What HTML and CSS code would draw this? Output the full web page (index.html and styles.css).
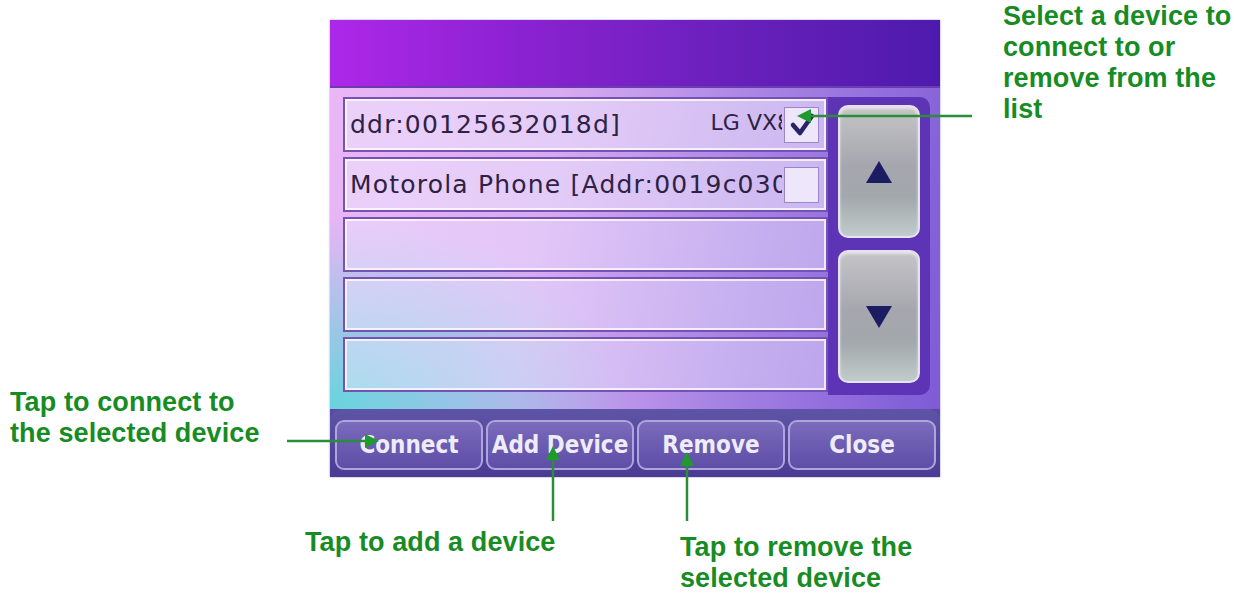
FILE: index.html
```html
<!DOCTYPE html>
<html lang="en">
<head>
    <meta charset="UTF-8">
    <meta name="viewport" content="width=device-width, initial-scale=1.0">
    <title>Bluetooth Devices</title>
    <link rel="stylesheet" href="styles.css">
</head>
<body>
    <div class="stage">
        <!-- Device window -->
        <div class="device">
            <div class="titlebar"></div>

            <div class="content">
                <div class="list">
                    <div class="row">
                        <span class="label">
                            <span>ddr:00125632018d]</span>
                            <span class="model">LG VX8</span>
                        </span>
                        <span class="check">
                            <svg width="30" height="30" viewBox="0 0 30 30">
                                <path d="M6 15 L13 23 L25 6" fill="none" stroke="#2a2466" stroke-width="4.5" stroke-linecap="round" stroke-linejoin="round"/>
                            </svg>
                        </span>
                    </div>
                    <div class="row">
                        <span class="label">Motorola Phone [Addr:0019c030]</span>
                        <span class="check"></span>
                    </div>
                    <div class="row"></div>
                    <div class="row"></div>
                    <div class="row"></div>
                </div>

                <div class="scroller">
                    <button class="scroll-btn"><span class="tri up"></span></button>
                    <button class="scroll-btn"><span class="tri down"></span></button>
                </div>
            </div>

            <div class="toolbar">
                <button class="tool-btn">Connect</button>
                <button class="tool-btn">Add Device</button>
                <button class="tool-btn">Remove</button>
                <button class="tool-btn">Close</button>
            </div>
        </div>

        <!-- Callout pointers -->
        <svg class="pointers" width="1234" height="595" viewBox="0 0 1234 595">
            <g stroke="#2b8c3a" stroke-width="2.5">
                <line x1="806" y1="116" x2="972" y2="116"/>
                <line x1="287" y1="441" x2="368" y2="441"/>
                <line x1="553" y1="458" x2="553" y2="521"/>
                <line x1="687" y1="464" x2="687" y2="521"/>
            </g>
            <g fill="#1f9a2e">
                <polygon points="797,116 811,109 811,123"/>
                <polygon points="379,441 365,434 365,448"/>
                <polygon points="553,446 546,460 560,460"/>
                <polygon points="687,452 680,466 694,466"/>
            </g>
        </svg>

        <p class="note note-select">Select a device to<br>connect to or<br>remove from the<br>list</p>
        <p class="note note-connect">Tap to connect to<br>the selected device</p>
        <p class="note note-add">Tap to add a device</p>
        <p class="note note-remove">Tap to remove the<br>selected device</p>
    </div>
</body>
</html>
```

FILE: styles.css
```css
/* General Styling */
body {
    margin: 0;
    background-color: #ffffff;
    font-family: "DejaVu Sans", sans-serif;
}

.stage {
    position: relative;
    width: 1234px;
    height: 595px;
    padding: 20px 0 0 330px;
    box-sizing: border-box;
    overflow: hidden;
}

/* Device window */
.device {
    width: 610px;
    height: 457px;
    display: flex;
    flex-direction: column;
    background: #5a48a4;
    box-shadow: 0 0 2px rgba(60, 40, 120, 0.5);
}

.titlebar {
    height: 66px;
    background: linear-gradient(90deg, #ad28e8 0%, #8c22d2 30%, #6a20bc 65%, #4e1aae 100%);
    border-bottom: 2px solid #6a3cb0;
}

.content {
    height: 321px;
    display: flex;
    padding: 9px 10px 0 13px;
    box-sizing: border-box;
    background:
        radial-gradient(ellipse 70% 85% at 0% 100%, rgba(96, 214, 220, 0.95), rgba(96, 214, 220, 0) 70%),
        linear-gradient(100deg, #eab6f6 0%, #d8aaf2 35%, #a884e4 65%, #7e5ad6 100%);
}

.list {
    width: 485px;
    display: flex;
    flex-direction: column;
    gap: 5px;
}

.row {
    height: 55px;
    display: flex;
    align-items: center;
    padding: 0 7px 0 5px;
    box-sizing: border-box;
    background-color: rgba(240, 232, 255, 0.45);
    border: 2px solid #7652b4;
    box-shadow: inset 0 0 0 2px rgba(255, 255, 255, 0.75);
    color: #2e2244;
    font-size: 25px;
    letter-spacing: 1.2px;
}

.row:nth-child(-n+2) {
    background-color: rgba(236, 226, 252, 0.6);
}

.label {
    flex: 1;
    display: flex;
    overflow: hidden;
    white-space: nowrap;
    margin-right: 2px;
}

.model {
    margin-left: auto;
    margin-right: -9px;
    font-size: 22px;
    letter-spacing: 0;
}

.check {
    width: 35px;
    height: 36px;
    flex-shrink: 0;
    display: flex;
    align-items: center;
    justify-content: center;
    background-color: #eee6fa;
    border: 1px solid #9a86c8;
    box-sizing: border-box;
}

/* Scroll buttons */
.scroller {
    width: 102px;
    height: 298px;
    display: flex;
    flex-direction: column;
    gap: 12px;
    padding: 8px 10px 0 10px;
    box-sizing: border-box;
    background-color: #5e34b6;
    border-radius: 0 10px 10px 0;
}

.scroll-btn {
    height: 133px;
    display: flex;
    align-items: center;
    justify-content: center;
    padding: 0;
    border: 2px solid #e6e2ee;
    border-radius: 10px;
    background: linear-gradient(180deg, #c4c4c8 0%, #a6a6ae 45%, #a2a8ac 70%, #c2cccc 100%);
    box-shadow: inset 0 2px 3px rgba(255, 255, 255, 0.6);
}

.tri {
    width: 0;
    height: 0;
    border-left: 13px solid transparent;
    border-right: 13px solid transparent;
}

.tri.up {
    border-bottom: 22px solid #1c1c62;
}

.tri.down {
    border-top: 22px solid #1c1c62;
}

/* Bottom toolbar */
.toolbar {
    height: 68px;
    display: flex;
    gap: 3px;
    padding: 11px 3px 0 5px;
    box-sizing: border-box;
    background: linear-gradient(180deg, #5e54a6 0%, #52469c 60%, #4a3a94 100%);
    border-radius: 12px 12px 0 0;
}

.tool-btn {
    width: 148px;
    height: 50px;
    border: 2px solid #b0a4dc;
    border-radius: 9px;
    background: linear-gradient(180deg, #7c6cbc 0%, #6a5ab0 55%, #5e4ea6 100%);
    color: #eeecf8;
    font-family: "DejaVu Sans Condensed", "DejaVu Sans", sans-serif;
    font-weight: bold;
    font-size: 24px;
    padding: 0;
}

/* Callouts */
.pointers {
    position: absolute;
    left: 0;
    top: 0;
    pointer-events: none;
}

.note {
    position: absolute;
    margin: 0;
    color: #178c24;
    font-family: "Liberation Sans", Arial, sans-serif;
    font-weight: bold;
    font-size: 27px;
    line-height: 31px;
    letter-spacing: 0.1px;
    white-space: nowrap;
}

.note-select {
    left: 1003px;
    top: 1px;
}

.note-connect {
    left: 10px;
    top: 387px;
}

.note-add {
    left: 305px;
    top: 527px;
}

.note-remove {
    left: 680px;
    top: 532px;
}
```
